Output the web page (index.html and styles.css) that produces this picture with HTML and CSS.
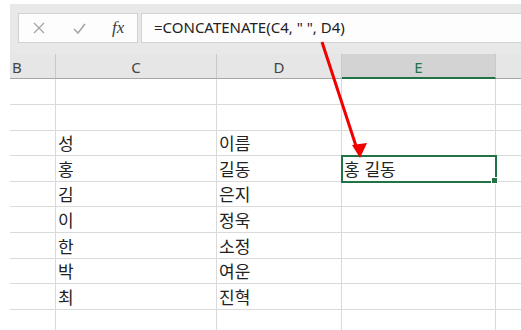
FILE: index.html
```html
<!DOCTYPE html>
<html lang="ko">
<head>
    <meta charset="UTF-8">
    <title>CONCATENATE</title>
    <link rel="stylesheet" href="styles.css">
</head>
<body>
    <div class="sheet">
        <div class="formula-bar">
            <div class="fx-box">
                <span class="fx-btn muted">
                    <svg width="12" height="12" viewBox="0 0 12 12"><path d="M1 1 L11 11 M11 1 L1 11" stroke="#a6a6a6" stroke-width="1.3" fill="none"/></svg>
                </span>
                <span class="fx-btn muted">
                    <svg width="13" height="11" viewBox="0 0 13 11"><path d="M1 6 L5 10 L12 1" stroke="#a6a6a6" stroke-width="1.6" fill="none"/></svg>
                </span>
                <span class="fx-btn fx">fx</span>
            </div>
            <div class="formula">=CONCATENATE(C4, " ", D4)</div>
        </div>

        <div class="grid">
            <div class="hd hd-b">B</div>
            <div class="hd">C</div>
            <div class="hd">D</div>
            <div class="hd active">E</div>
            <div class="hd last"></div>

            <div class="c"></div><div class="c"></div><div class="c"></div><div class="c"></div><div class="c last"></div>
            <div class="c"></div><div class="c"></div><div class="c"></div><div class="c"></div><div class="c last"></div>
            <div class="c"></div><div class="c">성</div><div class="c">이름</div><div class="c"></div><div class="c last"></div>
            <div class="c"></div><div class="c">홍</div><div class="c">길동</div><div class="c selected">홍 길동</div><div class="c last"></div>
            <div class="c"></div><div class="c">김</div><div class="c">은지</div><div class="c"></div><div class="c last"></div>
            <div class="c"></div><div class="c">이</div><div class="c">정욱</div><div class="c"></div><div class="c last"></div>
            <div class="c"></div><div class="c">한</div><div class="c">소정</div><div class="c"></div><div class="c last"></div>
            <div class="c"></div><div class="c">박</div><div class="c">여운</div><div class="c"></div><div class="c last"></div>
            <div class="c"></div><div class="c">최</div><div class="c">진혁</div><div class="c"></div><div class="c last"></div>
            <div class="c"></div><div class="c"></div><div class="c"></div><div class="c"></div><div class="c last"></div>
        </div>
    </div>

    <svg class="arrow" width="521" height="330" viewBox="0 0 521 330">
        <line x1="322" y1="42" x2="356" y2="146" stroke="#f00000" stroke-width="3"/>
        <polygon points="360,158 352,145 367,143" fill="#f00000"/>
    </svg>
</body>
</html>
```

FILE: styles.css
```css
html, body {
    margin: 0;
    padding: 0;
    background: #ffffff;
}
body {
    width: 521px;
    height: 330px;
    overflow: hidden;
    position: relative;
}
.sheet {
    padding: 4px 0 0 10px;
}

.formula-bar {
    display: flex;
    gap: 3px;
    height: 50px;
    box-sizing: border-box;
    padding: 9px 0 0 8px;
    background: #e8e8e8;
}
.fx-box, .formula {
    height: 30px;
    box-sizing: border-box;
    border: 1px solid #d2d2d2;
    background: #fdfdfd;
}
.fx-box {
    width: 120px;
    display: flex;
    align-items: center;
    padding-left: 14px;
    gap: 28px;
}
.fx-btn {
    display: flex;
    align-items: center;
}
.fx {
    font-family: "Liberation Serif", serif;
    font-style: italic;
    font-size: 17px;
    color: #3c3c3c;
    margin-left: -2px;
}
.formula {
    flex: 1;
    border-right: none;
    padding-left: 12px;
    font-family: "Noto Sans", sans-serif;
    font-size: 15px;
    line-height: 27px;
    color: #222222;
}

.grid {
    display: grid;
    grid-template-columns: 46px 161px 125px 154px 1fr;
    grid-template-rows: 25px 26px 26px 25px 26px 25px 26px 26px 25px 26px 30px;
    background: #ffffff;
    font-family: "Noto Sans CJK KR", "Noto Sans", sans-serif;
    font-size: 17px;
    color: #222222;
}
.hd {
    background: #e6e6e6;
    border-right: 1px solid #c9c9c9;
    border-bottom: 1px solid #a6a6a6;
    font-family: "Noto Sans", sans-serif;
    font-size: 15px;
    color: #444444;
    display: flex;
    align-items: center;
    justify-content: center;
    padding-top: 1px;
    box-sizing: border-box;
}
.hd-b {
    justify-content: flex-start;
    padding-left: 2px;
}
.hd.active {
    background: #d3d3d3;
    color: #217346;
    border-bottom: 2px solid #217346;
    padding-top: 2px;
}
.hd.last {
    border-right: none;
}
.c {
    border-right: 1px solid #dadada;
    border-bottom: 1px solid #dadada;
    box-sizing: border-box;
    display: flex;
    align-items: flex-end;
    padding: 0 0 1px 2px;
    line-height: 22px;
}
.c.last {
    border-right: none;
}
.c.selected {
    position: relative;
    outline: 2px solid #217346;
    outline-offset: -1px;
    z-index: 1;
}
.c.selected::after {
    content: "";
    position: absolute;
    right: -3px;
    bottom: -3px;
    width: 5px;
    height: 5px;
    background: #217346;
    border: 1px solid #ffffff;
}

.arrow {
    position: absolute;
    left: 0;
    top: 0;
    z-index: 2;
}
```
